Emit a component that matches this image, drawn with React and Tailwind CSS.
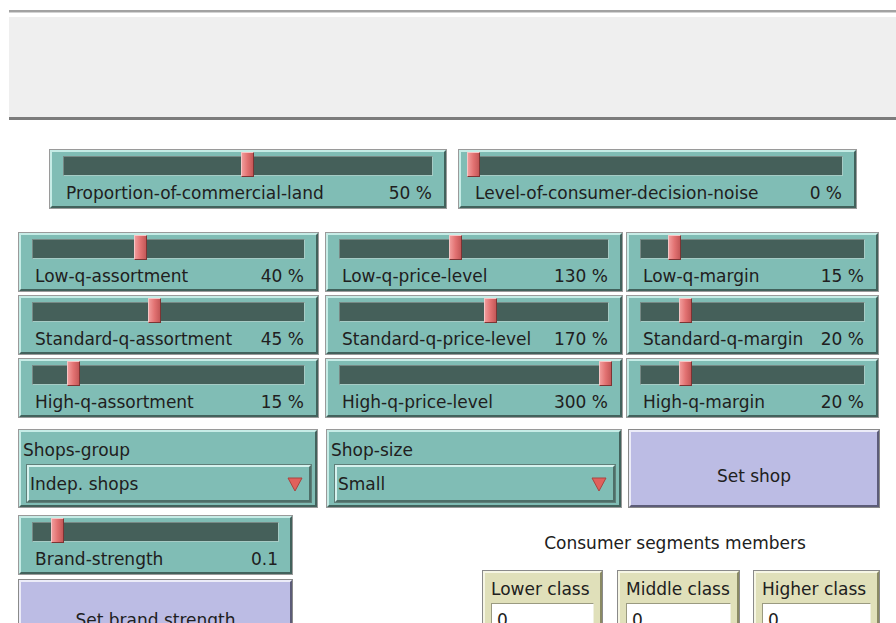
import React from 'react';

const FONT = { fontFamily: '"DejaVu Sans", Verdana, sans-serif' };

// knob sits 5px past each end of the track at min/max
const Slider = ({ label, value, pct, className }) => (
  <div className={`h-[60px] border border-[#9a9a9a] ${className}`}>
    <div className="h-full border-2 border-t-[#c6ece6] border-l-[#c6ece6] border-r-[#42625c] border-b-[#42625c] bg-[#80bdb5] px-[11px] pt-[4px]">
      <div className="relative h-[20px] border border-t-[#778a86] border-l-[#778a86] border-r-[#a6cbc5] border-b-[#a6cbc5] bg-[#45605a]">
        <div
          className="absolute top-[-5px] h-[25px] w-[13px] border border-t-[#f6c6c6] border-l-[#f6c6c6] border-r-[#7c3434] border-b-[#7c3434] bg-gradient-to-r from-[#f09a9a] via-[#e27272] to-[#c45858]"
          style={{ left: `calc(${pct} * (100% + 10px - 13px) - 6px)` }}
        />
      </div>
      <div className="mt-[7px] flex justify-between pl-[3px] pr-[1px] text-[17px] leading-[20px] text-[#202020]">
        <span>{label}</span>
        <span>{value}</span>
      </div>
    </div>
  </div>
);

const Chooser = ({ label, value, className }) => (
  <div className={`h-[79px] border border-[#9a9a9a] ${className}`}>
    <div className="h-full border-2 border-t-[#c6ece6] border-l-[#c6ece6] border-r-[#42625c] border-b-[#42625c] bg-[#80bdb5] px-[2px] pt-[8px]">
      <div className="text-[17px] leading-[20px] text-[#202020]">{label}</div>
      <div className="mt-[4px] ml-[3px] mr-[1px] h-[39px] border border-[#5f7f79]">
        <div className="flex h-full items-center justify-between border-2 border-t-[#d6f2ee] border-l-[#d6f2ee] border-r-[#4d6e68] border-b-[#4d6e68] bg-[#80bdb5] pl-[1px] pr-[6px]">
          <span className="text-[17px] leading-[20px] text-[#202020]">{value}</span>
          <svg width="16" height="16" viewBox="0 0 16 16">
            <polygon points="1,2 15,2 8,15" fill="#e0605c" stroke="#a84440" strokeWidth="1" />
          </svg>
        </div>
      </div>
    </div>
  </div>
);

const Button = ({ label, className }) => (
  <div className={`border border-[#8a8a8a] ${className}`}>
    <div className="flex h-full justify-center border-2 border-t-[#ececf8] border-l-[#ececf8] border-r-[#5c5c78] border-b-[#5c5c78] bg-[#bcbce4] text-[17px] leading-[20px] text-[#202020]">
      {label}
    </div>
  </div>
);

const Monitor = ({ label, className }) => (
  <div className={`h-[80px] border border-[#8a8a8a] ${className}`}>
    <div className="h-full border-2 border-t-[#f6f6e4] border-l-[#f6f6e4] border-r-[#8a8a64] border-b-[#8a8a64] bg-[#e0e0ba] px-[6px] pt-[6px]">
      <div className="whitespace-nowrap text-[17px] leading-[20px] text-[#202020]">{label}</div>
      <div className="mt-[4px] h-[40px] border border-t-[#9a9a80] border-l-[#9a9a80] border-r-[#f0f0e0] border-b-[#f0f0e0] bg-white px-[5px] pt-[6px] text-[17px] leading-[20px] text-[#202020]">
        0
      </div>
    </div>
  </div>
);

export default function App() {
  const rows = [
    [
      { label: 'Low-q-assortment', value: '40 %', pct: 0.4 },
      { label: 'Low-q-price-level', value: '130 %', pct: 0.433 },
      { label: 'Low-q-margin', value: '15 %', pct: 0.15 },
    ],
    [
      { label: 'Standard-q-assortment', value: '45 %', pct: 0.45 },
      { label: 'Standard-q-price-level', value: '170 %', pct: 0.567 },
      { label: 'Standard-q-margin', value: '20 %', pct: 0.2 },
    ],
    [
      { label: 'High-q-assortment', value: '15 %', pct: 0.15 },
      { label: 'High-q-price-level', value: '300 %', pct: 1 },
      { label: 'High-q-margin', value: '20 %', pct: 0.2 },
    ],
  ];

  return (
    <div className="h-[623px] w-[896px] overflow-hidden bg-white" style={FONT}>
      {/* output area */}
      <div className="pl-[9px] pt-[10px]">
        <div className="h-[3px] border-t-2 border-b border-t-[#a2a2a2] border-b-[#d2d2d2]" />
        <div className="mt-[4px] h-[103px] border-b-[3px] border-b-[#7c7c7c] bg-[#efefef]" />
      </div>

      <div className="ml-[49px] mt-[29px] flex">
        <Slider className="w-[398px]" label="Proportion-of-commercial-land" value="50 %" pct={0.5} />
        <Slider className="ml-[11px] w-[399px]" label="Level-of-consumer-decision-noise" value="0 %" pct={0} />
      </div>

      <div className="ml-[18px] mt-[23px] flex flex-col gap-[3px]">
        {rows.map((row, i) => (
          <div key={i} className="flex">
            <Slider className="w-[301px]" {...row[0]} />
            <Slider className="ml-[6px] w-[298px]" {...row[1]} />
            <Slider className="ml-[3px] w-[253px]" {...row[2]} />
          </div>
        ))}
      </div>

      <div className="ml-[18px] mt-[11px] flex">
        <Chooser className="w-[300px]" label="Shops-group" value="Indep. shops" />
        <Chooser className="ml-[8px] w-[296px]" label="Shop-size" value="Small" />
        <Button className="ml-[6px] h-[79px] w-[252px] [&>div]:pt-[34px]" label="Set shop" />
      </div>

      <div className="ml-[18px] mt-[7px] flex">
        <div className="w-[275px]">
          <Slider className="h-[59px]" label="Brand-strength" value="0.1" pct={0.1} />
          <Button className="mt-[4px] h-[80px] [&>div]:pt-[28px]" label="Set brand strength" />
        </div>
        <div className="ml-[189px] w-[398px]">
          <div className="mt-[18px] pr-[12px] text-center text-[17px] leading-[20px] text-[#202020]">
            Consumer segments members
          </div>
          <div className="mt-[17px] flex">
            <Monitor className="w-[121px]" label="Lower class" />
            <Monitor className="ml-[14px] w-[123px]" label="Middle class" />
            <Monitor className="ml-[13px] w-[127px]" label="Higher class" />
          </div>
        </div>
      </div>
    </div>
  );
}
